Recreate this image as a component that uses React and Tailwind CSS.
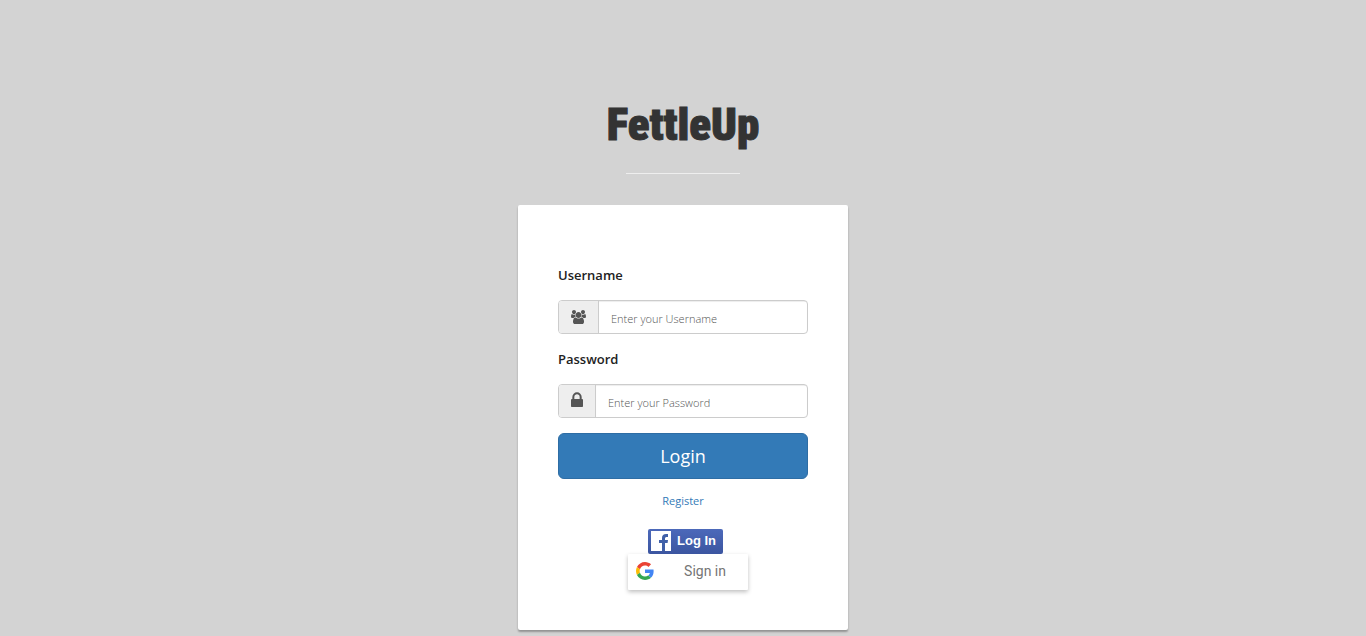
const UsersIcon = () => (
  <svg viewBox="0 0 1920 1792" className="h-[14px] w-[15px] fill-[#555]" aria-hidden="true">
    <path d="M593 896q-162 5-265 128h-134q-82 0-138-40.500t-56-118.500q0-353 124-353 6 0 43.500 21t97.500 42.500 119 21.500q67 0 133-23-5 37-5 66 0 139 81 256zM1664 1533q0 120-73 189.500t-194 69.500h-874q-121 0-194-69.500t-73-189.500q0-53 3.500-103.500t14-109 26.500-108.500 43-97.500 62-81 85.500-53.500 111.500-20q10 0 43 21.500t73 48 107 48 135 21.500 135-21.500 107-48 73-48 43-21.500q61 0 111.500 20t85.500 53.500 62 81 43 97.500 26.500 108.500 14 109 3.500 103.500zM640 256q0 106-75 181t-181 75-181-75-75-181 75-181 181-75 181 75 75 181zM1344 640q0 159-112.500 271.500t-271.500 112.500-271.500-112.500-112.500-271.500 112.500-271.500 271.500-112.500 271.500 112.500 112.500 271.500zM1920 865q0 78-56 118.500t-138 40.500h-134q-103-123-265-128 81-117 81-256 0-29-5-66 66 23 133 23 59 0 119-21.500t97.500-42.500 43.500-21q124 0 124 353zM1792 256q0 106-75 181t-181 75-181-75-75-181 75-181 181-75 181 75 75 181z" />
  </svg>
);

const LockIcon = () => (
  <svg viewBox="0 128 1152 1664" className="h-[18px] w-3 fill-[#555]" aria-hidden="true">
    <path d="M320 768h512v-192q0-106-75-181t-181-75-181 75-75 181v192zM1152 864v576q0 40-28 68t-68 28h-960q-40 0-68-28t-28-68v-576q0-40 28-68t68-28h32v-192q0-184 132-316t316-132 316 132 132 316v192h32q40 0 68 28t28 68z" />
  </svg>
);

const FacebookMark = () => (
  <svg viewBox="0 0 20 20" className="size-5" aria-hidden="true">
    <path fill="#fff" d="M0 0h20v20H0z" />
    <path fill="#4060a8" d="M11 20v-8H8V9h3V7c0-2.800 1.500-4 4.100-4H17v3h-.9c-1.500 0-2.100.500-2.100 1.500V9h3l-.4 3H14v8z" />
  </svg>
);

const GoogleMark = () => (
  <svg viewBox="0 0 48 48" className="size-[18px]" aria-hidden="true">
    <path fill="#EA4335" d="M24 9.500c3.540 0 6.710 1.220 9.210 3.600l6.850-6.850C35.900 2.380 30.470 0 24 0 14.620 0 6.510 5.380 2.560 13.220l7.980 6.190C12.430 13.720 17.740 9.500 24 9.500z" />
    <path fill="#4285F4" d="M46.980 24.550c0-1.570-.15-3.090-.38-4.550H24v9.020h12.940c-.58 2.960-2.260 5.480-4.780 7.180l7.730 6c4.510-4.180 7.090-10.360 7.090-17.650z" />
    <path fill="#FBBC05" d="M10.530 28.590c-.48-1.450-.76-2.990-.76-4.590s.27-3.140.76-4.590l-7.980-6.190C.92 16.460 0 20.120 0 24c0 3.880.92 7.540 2.560 10.780l7.970-6.190z" />
    <path fill="#34A853" d="M24 48c6.480 0 11.930-2.130 15.890-5.810l-7.730-6c-2.150 1.450-4.920 2.300-8.160 2.300-6.260 0-11.570-4.220-13.470-9.910l-7.980 6.190C6.510 42.620 14.620 48 24 48z" />
  </svg>
);

function Field({ id, label, type, placeholder, icon }) {
  return (
    <div className="mb-[15px]">
      <label htmlFor={id} className="mb-[15px] block text-[13px] leading-5 font-semibold text-[#222]">
        {label}
      </label>
      <div className="flex h-[34px] overflow-hidden rounded border border-[#ccc] bg-white">
        <span className="flex items-center border-r border-[#ccc] bg-[#eee] px-3">{icon}</span>
        <input
          id={id}
          type={type}
          placeholder={placeholder}
          className="min-w-0 flex-1 px-3 pt-1 text-[11px] font-light text-[#555] shadow-[inset_0_1px_1px_rgba(0,0,0,0.075)] outline-none placeholder:text-[#555]"
        />
      </div>
    </div>
  );
}

export default function App() {
  return (
    <main className="min-h-screen bg-[#d3d3d3] px-4 pt-24 pb-[6px] font-['Open_Sans','Noto_Sans',sans-serif]">
      <h1 className="text-center font-['Roboto_Condensed','Liberation_Sans_Narrow',sans-serif] text-[45px] leading-[58px] font-black text-[#333] [-webkit-text-stroke:1px_#333]">
        FettleUp
      </h1>
      <hr className="mx-auto mt-[19px] w-[114px] border-[#eee]" />
      <section className="mx-auto mt-[31px] max-w-[330px] rounded-[2px] bg-white px-10 pt-[60px] pb-10 shadow-[0_2px_2px_rgba(0,0,0,0.3)]">
        <form onSubmit={(e) => e.preventDefault()}>
          <Field id="username" label="Username" type="text" placeholder="Enter your Username" icon={<UsersIcon />} />
          <Field id="password" label="Password" type="password" placeholder="Enter your Password" icon={<LockIcon />} />
          <button
            type="submit"
            className="h-[46px] w-full rounded-md border border-[#2e6da4] bg-[#337ab7] text-lg leading-6 text-white"
          >
            Login
          </button>
        </form>
        <p className="mt-3 text-center text-[11px] leading-5">
          <a href="#register" className="text-[#337ab7]">
            Register
          </a>
        </p>
        <div className="mt-[18px] flex flex-col items-center">
          <button
            type="button"
            className="z-10 ml-[5px] flex h-[25px] w-[75px] items-center gap-[6px] rounded-[2px] bg-linear-to-b from-[#4c69ba] to-[#3b55a0] pb-px pl-[3px] font-['Liberation_Sans',Arial,sans-serif] text-[13px] font-bold whitespace-nowrap text-white"
          >
            <FacebookMark />
            Log In
          </button>
          <button
            type="button"
            className="ml-[10px] flex h-9 w-[120px] items-center rounded-[1px] bg-white pr-[22px] pb-[2px] pl-2 font-['Roboto',sans-serif] text-sm text-[#757575] shadow-[0_2px_4px_rgba(0,0,0,0.25)]"
          >
            <GoogleMark />
            <span className="flex-1 text-right">Sign in</span>
          </button>
        </div>
      </section>
    </main>
  );
}
